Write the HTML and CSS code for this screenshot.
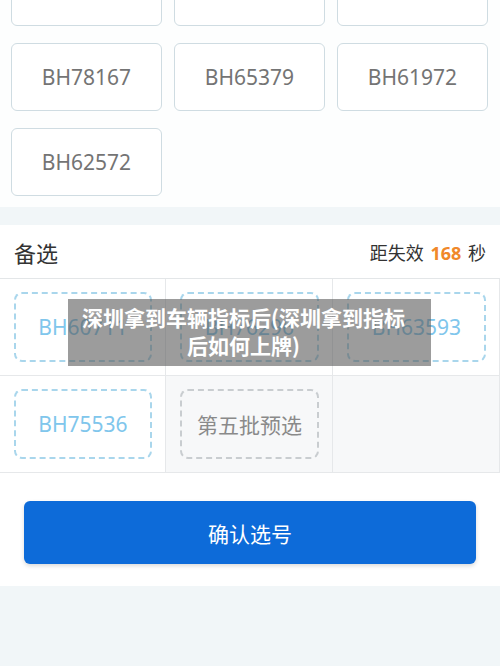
FILE: index.html
```html
<!DOCTYPE html>
<html lang="zh-CN">
<head>
    <meta charset="UTF-8">
    <meta name="viewport" content="width=device-width, initial-scale=1.0">
    <title>选号</title>
    <link rel="stylesheet" href="styles.css">
</head>
<body>
    <div class="pool">
        <div class="plate">BH81677</div>
        <div class="plate">BH71282</div>
        <div class="plate">BH71765</div>
        <div class="plate">BH78167</div>
        <div class="plate">BH65379</div>
        <div class="plate">BH61972</div>
        <div class="plate">BH62572</div>
    </div>

    <div class="band"></div>

    <div class="section">
        <div class="section-head">
            <h2>备选</h2>
            <div class="timer">距失效 <b>168</b> 秒</div>
        </div>
        <div class="picks">
            <div class="cell"><div class="pick">BH60711</div></div>
            <div class="cell"><div class="pick">BH76296</div></div>
            <div class="cell"><div class="pick">BH63593</div></div>
            <div class="cell"><div class="pick">BH75536</div></div>
            <div class="cell empty"><div class="pick pending">第五批预选</div></div>
            <div class="cell empty"></div>
        </div>
        <div class="actions">
            <button class="confirm">确认选号</button>
        </div>
    </div>

    <div class="caption">深圳拿到车辆指标后(深圳拿到指标<br>后如何上牌)</div>
</body>
</html>
```

FILE: styles.css
```css
body {
    margin: 0;
    width: 500px;
    height: 666px;
    overflow: hidden;
    font-family: "Noto Sans", "Noto Sans CJK SC", sans-serif;
    background-color: #f1f6f8;
    position: relative;
}
.pool {
    display: grid;
    grid-template-columns: repeat(3, 151px);
    column-gap: 12px;
    row-gap: 17px;
    margin-top: -42px;
    padding: 0 12px 11px 11px;
    background-color: #fdfefe;
}
.plate {
    height: 66px;
    border: 1px solid #cfdce2;
    border-radius: 6px;
    background-color: white;
    display: flex;
    align-items: center;
    justify-content: center;
    font-size: 21px;
    color: #747474;
}
.band {
    height: 18px;
}
.section {
    background-color: white;
}
.section-head {
    height: 53px;
    display: flex;
    align-items: center;
    justify-content: space-between;
    padding: 0 14px;
    border-bottom: 1px solid #e3e6e8;
}
.section-head h2 {
    margin: 0;
    font-size: 22px;
    font-weight: normal;
    color: #333;
}
.timer {
    font-size: 18px;
    color: #333;
}
.timer b {
    color: #f0882a;
    margin: 0 2px;
}
.picks {
    display: grid;
    grid-template-columns: 166px 167px 167px;
}
.cell {
    height: 97px;
    border-right: 1px solid #e6e8ea;
    border-bottom: 1px solid #e6e8ea;
    padding: 13px 13px 0 14px;
    box-sizing: border-box;
}
.cell.empty {
    background-color: #f7f8f9;
}
.pick {
    height: 66px;
    border: 2px dashed #a9d6ec;
    border-radius: 8px;
    display: flex;
    align-items: center;
    justify-content: center;
    font-size: 21px;
    color: #80c6ec;
}
.pick.pending {
    border-color: #c9cdd0;
    color: #8a8a8a;
}
.actions {
    padding: 28px 24px 22px;
}
.confirm {
    display: block;
    width: 100%;
    height: 63px;
    border: none;
    border-radius: 6px;
    background-color: #0d6bd9;
    color: white;
    font-family: "Noto Sans CJK SC", sans-serif;
    font-size: 21px;
    box-shadow: 0 2px 4px rgba(0, 0, 0, 0.15);
}
.caption {
    position: absolute;
    left: 68px;
    top: 299px;
    width: 363px;
    height: 67px;
    box-sizing: border-box;
    padding: 4px 20px 0 8px;
    background-color: rgba(90, 90, 90, 0.6);
    color: white;
    font-family: "Noto Sans CJK SC", sans-serif;
    font-weight: bold;
    font-size: 21px;
    line-height: 28px;
    text-align: center;
    white-space: nowrap;
}
```
